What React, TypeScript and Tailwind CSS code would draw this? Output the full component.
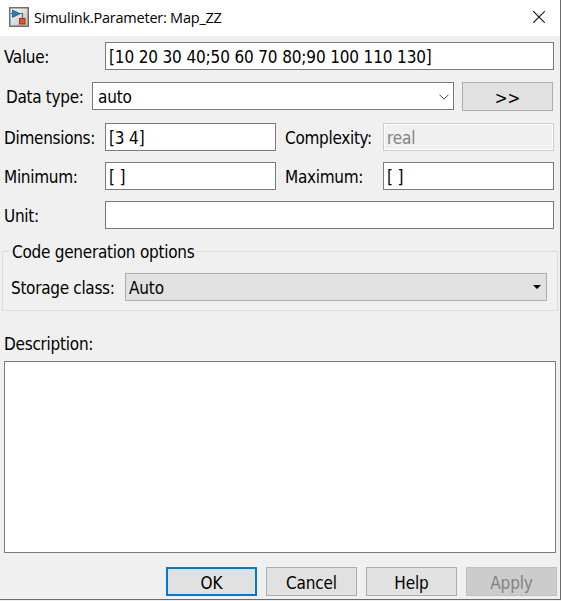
import type { ReactNode } from "react";

const field =
  "flex h-7 items-center border border-[#7a7a7a] bg-white pt-0.5 pl-[3px] text-black";

function Label({ className = "", children }: { className?: string; children: ReactNode }) {
  return <span className={`shrink-0 whitespace-nowrap tracking-[-0.3px] ${className}`}>{children}</span>;
}

function Button({ className = "", children }: { className?: string; children: ReactNode }) {
  return (
    <button
      type="button"
      className={`flex h-[29px] w-[91px] shrink-0 items-center justify-center pt-0.5 ${className}`}
    >
      {children}
    </button>
  );
}

const raised = "border border-[#adadad] bg-[#e1e1e1]";

function ParameterIcon() {
  return (
    <svg width="20" height="20" viewBox="0 0 20 20" className="mb-0.5 shrink-0">
      <defs>
        <linearGradient id="tile" x1="0" y1="0" x2="1" y2="1">
          <stop offset="0" stopColor="#ffffff" />
          <stop offset="1" stopColor="#bcbcbc" />
        </linearGradient>
      </defs>
      <rect x="0.75" y="0.75" width="18.5" height="18.5" fill="url(#tile)" stroke="#6e6e6e" strokeWidth="1.5" />
      <path d="M1.5 6.5H4M10 6.5H13.5V11" fill="none" stroke="#666" strokeWidth="1.2" />
      <path d="M3.5 3L11 6.7L3.5 10.4Z" fill="#1d83bd" stroke="#145f91" strokeWidth="0.8" />
      <rect x="10.5" y="11.5" width="5.5" height="5.5" fill="#e2562b" stroke="#a92f12" />
    </svg>
  );
}

export default function App() {
  return (
    <div className="h-[601px] w-[561px] overflow-hidden bg-[#f0f0f0] font-['DejaVu_Sans_Condensed','DejaVu_Sans',sans-serif] text-[17px] leading-6 tracking-[-0.15px] text-black">
      <div className="flex h-[600px] flex-col border-r border-b border-[#6b6b6b]">
        <header className="flex h-9 shrink-0 items-center bg-white pl-[9px] font-['Open_Sans','Noto_Sans',sans-serif] text-[14.5px] tracking-[-0.23px]">
          <ParameterIcon />
          <span className="ml-[5px]">Simulink.Parameter: Map_ZZ</span>
          <svg width="12" height="12" viewBox="0 0 12 12" className="mr-[15px] mb-0.5 ml-auto">
            <path d="M0.2 0.2L11.8 11.8M11.8 0.2L0.2 11.8" stroke="#111" strokeWidth="1.1" />
          </svg>
        </header>

        <div className="mt-1.5 flex h-7 items-center pl-1">
          <Label className="w-[101px] pt-0.5">Value:</Label>
          <div className={`${field} w-[449px]`}>[10 20 30 40;50 60 70 80;90 100 110 130]</div>
        </div>

        <div className="mt-3 flex h-[29px] items-start pl-1.5">
          <Label className="w-[86px] pt-[3px]">Data type:</Label>
          <div className={`${field} w-[362px] justify-between pr-1 pl-[5px]`}>
            auto
            <svg width="10" height="6" viewBox="0 0 10 6">
              <path d="M0.5 0.7L5 5.2L9.5 0.7" fill="none" stroke="#444" />
            </svg>
          </div>
          <Button className={`${raised} ml-2`}>&gt;&gt;</Button>
        </div>

        <div className="mt-3 flex h-7 items-center pl-1">
          <Label className="w-[101px] pt-0.5">Dimensions:</Label>
          <div className={`${field} w-[171px]`}>[3 4]</div>
          <Label className="w-[107px] pt-0.5 pl-[9px]">Complexity:</Label>
          <div className="h-7 w-[171px] border border-[#cccccc]">
            <div className="flex h-[26px] items-center border border-white pt-0.5 pl-0.5 text-[#838383]">real</div>
          </div>
        </div>

        <div className="mt-[11px] flex h-7 items-center pl-1">
          <Label className="w-[101px] pt-0.5">Minimum:</Label>
          <div className={`${field} w-[171px]`}>[ ]</div>
          <Label className="w-[107px] pt-0.5 pl-[9px]">Maximum:</Label>
          <div className={`${field} w-[171px]`}>[ ]</div>
        </div>

        <div className="mt-[11px] flex h-7 items-center pl-1">
          <Label className="w-[101px] pt-0.5">Unit:</Label>
          <div className={`${field} w-[449px]`} />
        </div>

        <fieldset className="mt-2.5 ml-0.5 h-[72px] w-[556px] border border-[#dcdcdc] pl-[7px]">
          <legend className="h-6 px-0.5 pt-px tracking-[-0.26px]">Code generation options</legend>
          <div className="mt-[10px] flex h-7 items-center pl-px">
            <Label className="w-[114px] pt-0.5">Storage class:</Label>
            <div className={`${raised} flex h-7 w-[422px] items-center justify-between pt-0.5 pr-[5px] pl-[3px]`}>
              Auto
              <svg width="8" height="4" viewBox="0 0 8 4" className="mb-0.5">
                <path d="M0 0H8L4 4Z" fill="black" />
              </svg>
            </div>
          </div>
        </fieldset>

        <div className="mt-[21px] h-[29px] pl-1 tracking-[-0.25px]">Description:</div>
        <div className="ml-1 h-48 w-[552px] shrink-0 border border-[#7a7a7a] bg-white" />

        <footer className="mt-3.5 flex justify-end gap-[9px] pr-[3px]">
          <Button className="border-2 border-[#0078d7] bg-[#e1e1e1]">OK</Button>
          <Button className={raised}>Cancel</Button>
          <Button className={raised}>Help</Button>
          <Button className="border border-[#bfbfbf] bg-[#cccccc] text-[#838383]">Apply</Button>
        </footer>
      </div>
    </div>
  );
}
